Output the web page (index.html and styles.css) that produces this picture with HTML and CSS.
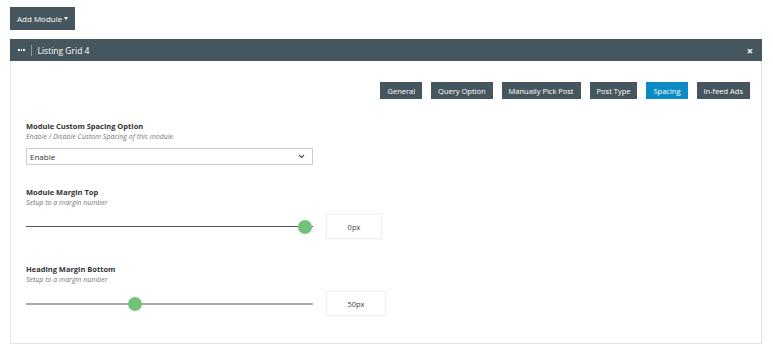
FILE: index.html
```html
<!DOCTYPE html>
<html lang="en">
  <head>
    <meta charset="UTF-8" />
    <meta name="viewport" content="width=device-width, initial-scale=1.0" />
    <title>Listing Grid 4</title>
    <link rel="stylesheet" href="styles.css">
  </head>
  <body>
    <button class="add-module">Add Module <span class="caret"></span></button>

    <div class="module">
      <div class="module-head">
        <span class="dots"><i></i><i></i><i></i></span>
        <span class="sep"></span>
        <span class="module-title">Listing Grid 4</span>
        <span class="close">&times;</span>
      </div>

      <div class="module-body">
        <div class="tabs">
          <button class="tab">General</button>
          <button class="tab">Query Option</button>
          <button class="tab">Manually Pick Post</button>
          <button class="tab">Post Type</button>
          <button class="tab active">Spacing</button>
          <button class="tab">In-feed Ads</button>
        </div>

        <div class="field">
          <div class="field-label">Module Custom Spacing Option</div>
          <div class="field-desc">Enable / Disable Custom Spacing of this module</div>
          <div class="select">
            <span>Enable</span>
            <svg width="7" height="5" viewBox="0 0 7 5"><path d="M1 1l2.5 2.5L6 1" fill="none" stroke="#555" stroke-width="1.2"/></svg>
          </div>
        </div>

        <div class="field">
          <div class="field-label">Module Margin Top</div>
          <div class="field-desc">Setup to a margin number</div>
          <div class="slider-row">
            <div class="slider dark">
              <div class="thumb" style="left: 97.2%"></div>
            </div>
            <div class="value">0px</div>
          </div>
        </div>

        <div class="field">
          <div class="field-label">Heading Margin Bottom</div>
          <div class="field-desc">Setup to a margin number</div>
          <div class="slider-row">
            <div class="slider">
              <div class="thumb" style="left: 38%"></div>
            </div>
            <div class="value wide">50px</div>
          </div>
        </div>
      </div>
    </div>
  </body>
</html>
```

FILE: styles.css
```css
body {
  font-family: "Open Sans", "Noto Sans", Arial, sans-serif;
  background-color: #ffffff;
  margin: 0;
  padding: 7px 10px 0;
  color: #333;
}

button {
  font-family: inherit;
  border: none;
  cursor: pointer;
}

.add-module {
  display: flex;
  align-items: center;
  gap: 2px;
  height: 23px;
  padding: 0 7px;
  background-color: #46565e;
  color: white;
  font-size: 8px;
}

.caret {
  width: 0;
  height: 0;
  border-left: 2.5px solid transparent;
  border-right: 2.5px solid transparent;
  border-top: 3px solid white;
}

.module {
  margin-top: 9px;
  width: 752px;
}

.module-head {
  display: flex;
  align-items: center;
  height: 22px;
  padding: 0 9px 0 8px;
  background-color: #46565e;
  color: white;
  font-size: 8.5px;
}

.dots {
  display: flex;
  gap: 1px;
}

.dots i {
  width: 1.5px;
  height: 1.5px;
  background: white;
}

.sep {
  width: 1px;
  height: 11px;
  background: #8a9aa2;
  margin: 0 6px 0 6px;
}

.module-title {
  flex: 1;
}

.close {
  font-size: 11px;
  font-weight: bold;
}

.module-body {
  height: 283px;
  border: 1px solid #e4e4e4;
  border-top: none;
  padding: 21px 15px 0;
  box-sizing: border-box;
  box-shadow: 1px 1px 2px rgba(0, 0, 0, 0.04);
}

.tabs {
  display: flex;
  justify-content: flex-end;
  gap: 9px;
  margin-right: -4px;
}

.tab {
  height: 17px;
  padding: 0 7px;
  background-color: #46565e;
  color: white;
  font-size: 7.5px;
}

.tab.active {
  background-color: #0b8bc6;
}

.field {
  margin-top: 22px;
}

.field:nth-child(4) {
  margin-top: 25px;
}

.field-label {
  font-size: 7.5px;
  font-weight: bold;
  color: #333;
  line-height: 11px;
}

.field-desc {
  font-size: 7px;
  font-style: italic;
  color: #777;
  line-height: 10px;
}

.select {
  display: flex;
  justify-content: space-between;
  align-items: center;
  width: 287px;
  height: 17px;
  margin-top: 6px;
  padding: 0 7px 0 3px;
  box-sizing: border-box;
  border: 1px solid #cfcfcf;
  font-size: 8px;
  color: #333;
}

.slider-row {
  display: flex;
  align-items: center;
  gap: 13px;
  margin-top: 6px;
}

.slider {
  position: relative;
  width: 287px;
  height: 2px;
  background: #aaaaaa;
}

.slider.dark {
  height: 1px;
  background: #555;
}

.thumb {
  position: absolute;
  top: 50%;
  width: 14px;
  height: 14px;
  margin: -7px 0 0 -7px;
  border-radius: 50%;
  background: #72c37a;
}

.value {
  display: flex;
  align-items: center;
  justify-content: center;
  width: 54px;
  height: 23px;
  border: 1px solid #f0f0f0;
  box-shadow: 0 0 2px rgba(0, 0, 0, 0.05);
  font-size: 7.5px;
  color: #444;
}

.value.wide {
  width: 58px;
}
```
